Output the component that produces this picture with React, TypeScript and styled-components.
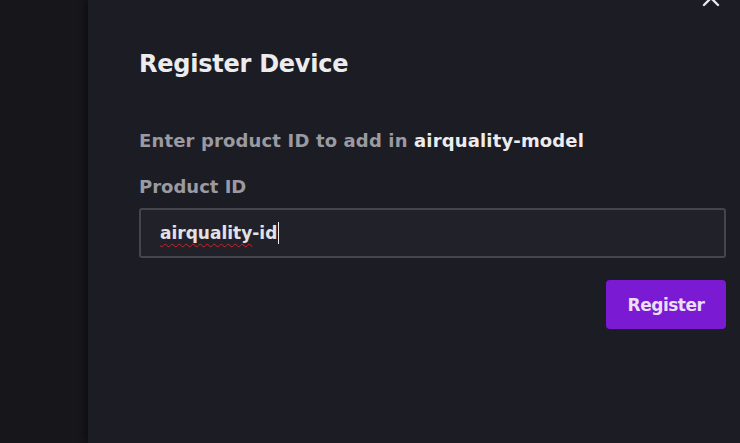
import React from "react";
import styled, { createGlobalStyle } from "styled-components";

const Global = createGlobalStyle`
  html, body { margin: 0; padding: 0; background: #16161b; }
  body { width: 740px; height: 443px; overflow: hidden; font-family: "DejaVu Sans", "Open Sans", sans-serif; }
  #root { width: 740px; height: 443px; }
`;

const Page = styled.div`
  display: flex;
  width: 740px;
  height: 443px;
  background: #16161b;
`;

const Backdrop = styled.div`
  width: 88px;
  flex-shrink: 0;
  background: #16161b;
`;

const Panel = styled.div`
  position: relative;
  flex: 1;
  background: #1c1c25;
  box-shadow: -3px 0 6px rgba(0, 0, 0, 0.35);
  padding: 46px 14px 0 51px;
  box-sizing: border-box;
`;

const Close = styled.button`
  position: absolute;
  top: -12px;
  right: 19px;
  width: 20px;
  height: 20px;
  padding: 0;
  border: none;
  background: transparent;
  color: #e8e8ec;
  display: flex;
  align-items: center;
  justify-content: center;
`;

const Title = styled.h2`
  margin: 0;
  font-size: 24px;
  font-weight: 700;
  color: #ececef;
  line-height: 36px;
  letter-spacing: -0.25px;
`;

const Subtitle = styled.p`
  margin: 46px 0 0;
  font-size: 18px;
  font-weight: 700;
  color: #9a9aa0;
  line-height: 26px;
  letter-spacing: 0.15px;
`;

const Strong = styled.span`
  color: #ececef;
`;

const Label = styled.label`
  display: block;
  margin-top: 20px;
  font-size: 18px;
  font-weight: 700;
  color: #9a9aa0;
  line-height: 26px;
`;

const Input = styled.div`
  margin-top: 8px;
  height: 50px;
  box-sizing: border-box;
  border: 2px solid #45454e;
  border-radius: 3px;
  background: #21212a;
  display: flex;
  align-items: center;
  padding: 0 19px;
`;

const Value = styled.span`
  font-size: 17px;
  font-weight: 600;
  color: #e2e2e6;
  text-decoration: underline wavy #d0202a;
  text-decoration-thickness: 1px;
  text-underline-offset: 4px;
  text-decoration-skip-ink: none;
`;

const ValueTail = styled.span`
  font-size: 17px;
  font-weight: 600;
  color: #e2e2e6;
`;

const Caret = styled.span`
  display: inline-block;
  width: 1px;
  height: 22px;
  background: #f0f0f0;
  margin-left: 1px;
`;

const Actions = styled.div`
  display: flex;
  justify-content: flex-end;
  margin-top: 22px;
`;

const Button = styled.button`
  width: 120px;
  height: 49px;
  border: none;
  border-radius: 4px;
  background: #7a1ad3;
  color: #eadff7;
  font-family: inherit;
  font-size: 17px;
  font-weight: 700;
  letter-spacing: -0.5px;
`;

export default function App() {
  return (
    <>
      <Global />
      <Page>
        <Backdrop />
        <Panel>
          <Close aria-label="Close">
            <svg width="18" height="18" viewBox="0 0 18 18" fill="none" stroke="currentColor" strokeWidth="2.4" strokeLinecap="round">
              <path d="M2 2 L16 16 M16 2 L2 16" />
            </svg>
          </Close>
          <Title>Register Device</Title>
          <Subtitle>
            Enter product ID to add in <Strong>airquality-model</Strong>
          </Subtitle>
          <Label>Product ID</Label>
          <Input>
            <Value>airquality</Value>
            <ValueTail>-id</ValueTail>
            <Caret />
          </Input>
          <Actions>
            <Button>Register</Button>
          </Actions>
        </Panel>
      </Page>
    </>
  );
}
